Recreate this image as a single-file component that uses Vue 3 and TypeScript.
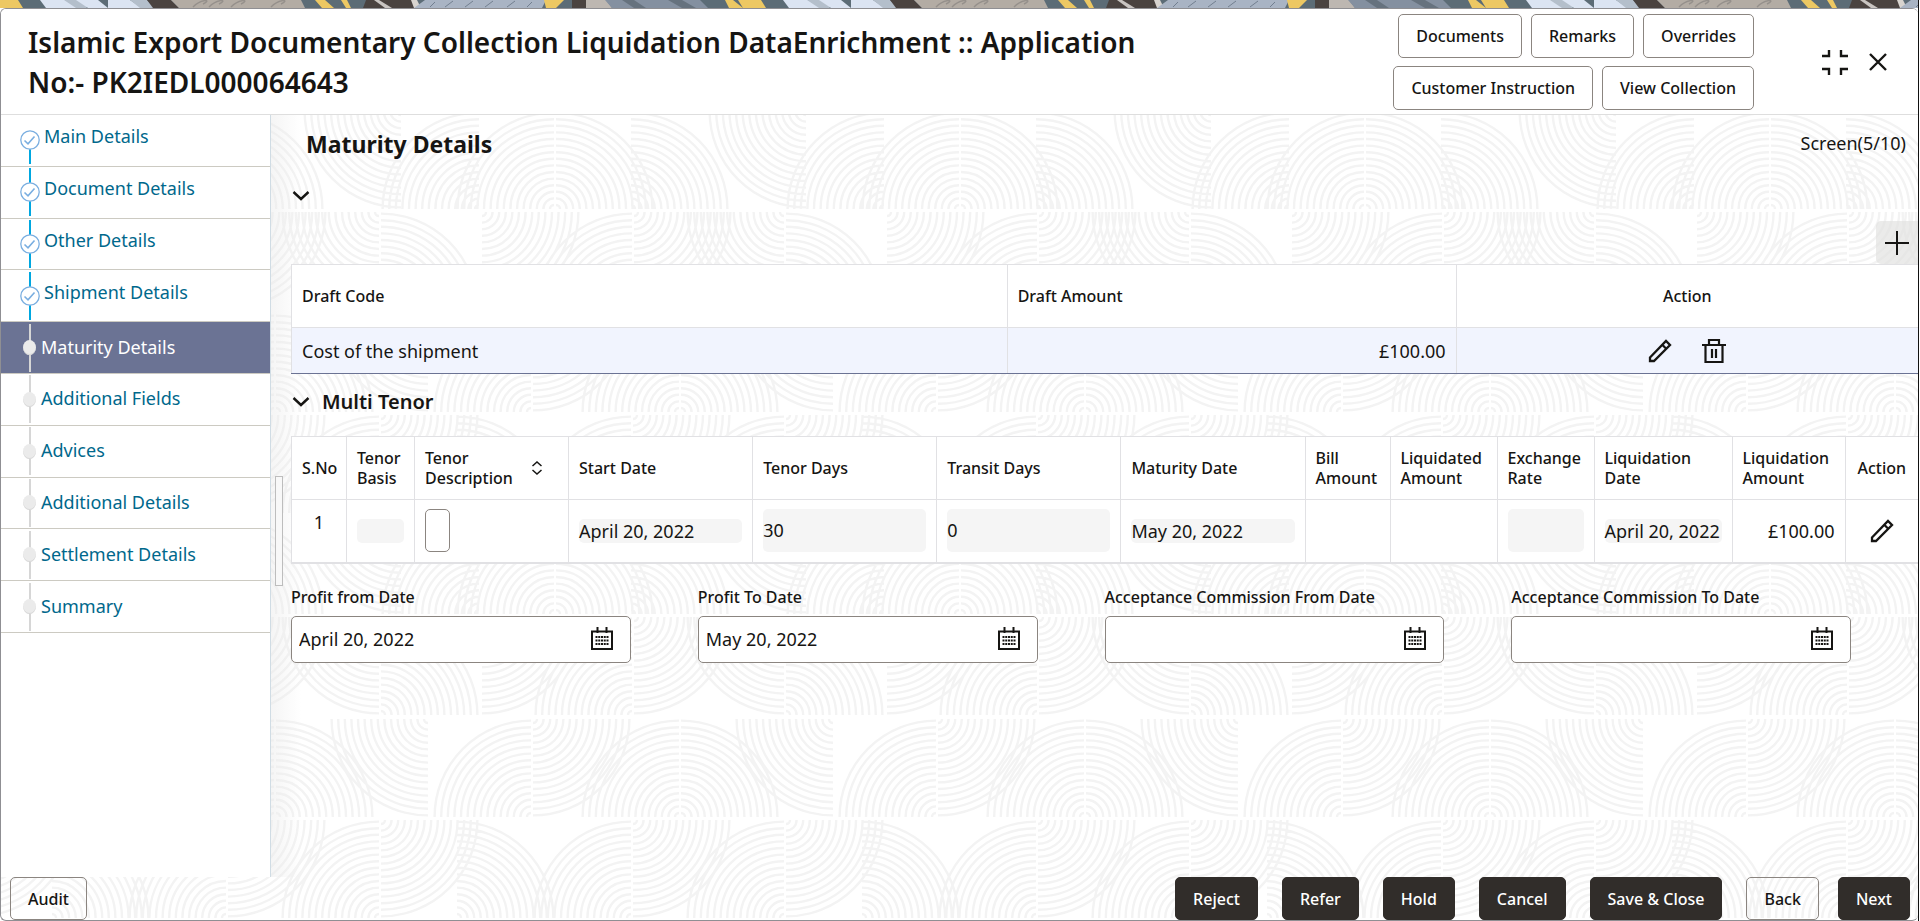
<script setup lang="ts">
import { ref } from 'vue'

interface Step {
  label: string
  state: 'done' | 'current' | 'todo'
}

interface DateField {
  id: string
  label: string
  value: string
}

interface Quarter {
  corner: 'TL' | 'TR' | 'BL' | 'BR'
  x: number
}

const steps: Step[] = [
  { label: 'Main Details', state: 'done' },
  { label: 'Document Details', state: 'done' },
  { label: 'Other Details', state: 'done' },
  { label: 'Shipment Details', state: 'done' },
  { label: 'Maturity Details', state: 'current' },
  { label: 'Additional Fields', state: 'todo' },
  { label: 'Advices', state: 'todo' },
  { label: 'Additional Details', state: 'todo' },
  { label: 'Settlement Details', state: 'todo' },
  { label: 'Summary', state: 'todo' }
]

const headerActions: string[][] = [
  ['Documents', 'Remarks', 'Overrides'],
  ['Customer Instruction', 'View Collection']
]

const dateFields = ref<DateField[]>([
  { id: 'profit-from', label: 'Profit from Date', value: 'April 20, 2022' },
  { id: 'profit-to', label: 'Profit To Date', value: 'May 20, 2022' },
  { id: 'acc-from', label: 'Acceptance Commission From Date', value: '' },
  { id: 'acc-to', label: 'Acceptance Commission To Date', value: '' }
])

const tenorDescription = ref('')

/* Backdrop: four rows of ribbed quarter circles, repeated every 405px. */
const tile = 405
const rowTops = [0, 101, 203, 304]
const rowHeight = 101
const rowQuarters: Quarter[][] = [
  [
    { corner: 'TL', x: 75 }, { corner: 'TL', x: 150 }, { corner: 'TR', x: 150 },
    { corner: 'TR', x: 225 }, { corner: 'BL', x: 402 }
  ],
  [
    { corner: 'BR', x: 76 }, { corner: 'TL', x: 228 }, { corner: 'BR', x: 228 },
    { corner: 'BL', x: 380 }, { corner: 'TR', x: 380 }
  ],
  [
    { corner: 'TL', x: 275 }, { corner: 'TR', x: 275 }, { corner: 'BL', x: 24 },
    { corner: 'TL', x: 127 }, { corner: 'BR', x: 127 }
  ],
  [
    { corner: 'TL', x: 380 }, { corner: 'BR', x: 380 }, { corner: 'TR', x: 51 },
    { corner: 'TL', x: 227 }, { corner: 'BR', x: 227 }
  ]
]

function arc(corner: Quarter['corner'], cx: number, cy: number, r: number): string {
  const h = corner[1] === 'L' ? -1 : 1
  const v = corner[0] === 'T' ? -1 : 1
  const sweep = h * v > 0 ? 1 : 0
  const x = cx + h
  return `M${x + h * r} ${cy}A${r} ${r} 0 0 ${sweep} ${x} ${cy + v * r}`
}

const ribs = rowQuarters
  .map((row, i) =>
    row
      .map((q) => {
        const cy = q.corner[0] === 'T' ? rowTops[i] + rowHeight - 1 : rowTops[i] + 2
        const parts: string[] = []
        for (const shift of [-tile, 0, tile]) {
          for (let r = 4; r <= 98; r += 6.6) parts.push(arc(q.corner, q.x + shift, cy, r))
        }
        return parts.join('')
      })
      .join('')
  )
  .join('')
</script>

<template>
  <div class="page">
    <svg class="strip" aria-hidden="true">
      <defs>
        <pattern id="strip-art" width="743" height="8" patternUnits="userSpaceOnUse">
          <rect width="743" height="8" fill="#5c6c76" />
          <path d="M0 0h18l5 8H0z" fill="#edc863" />
          <path d="M40 0h25l14 8H46z" fill="#dbe4f2" />
          <path d="M64 0h34l-12 8H76z" fill="#b4bfcb" />
          <path d="M76 0h22l10 8H88z" fill="#dbe4f2" />
          <path d="M108 0h22l12 8h-34z" fill="#dbe4f2" />
          <path d="M130 0h17l8 8h-15z" fill="#b4bfcb" />
          <path d="M147 0h24l8 8h-26z" fill="#4a4340" />
          <path d="M171 0h130l4 8H179z" fill="#b3aca4" />
          <path d="M193 7c8-8 20-8 10-3m6 3c8-8 20-8 10-3m12 3c8-8 20-8 10-3m30 3c8-8 20-8 10-3" fill="none" stroke="#95908b" stroke-width="1.5" />
          <path d="M315 0h10l9 8h-12zM341 0h6l4 8h-5z" fill="#edc863" />
          <path d="M366 0h47l6 8h-56z" fill="#4a4340" />
          <path d="M374 0h5l13 8h-7z" fill="#c9c5c2" />
          <path d="M411 0h6l4 8h-7z" fill="#d8d4cf" />
          <path d="M425 0h121l-4 8H414z" fill="#a9b4c4" />
          <path d="m430 7 5-5m10 5 8-6m12 6 8-6m12 6 8-6m14 6 8-6m12 6 5-5" stroke="#727f90" />
          <path d="M544 0h20l-8 8h-10z" fill="#edc863" />
          <path d="M572 0h14v8h-14z" fill="#4a4340" />
          <path d="M586 0h20l6 8h-26z" fill="#bdb7b1" />
          <path d="M605 0h95l8 8h-96z" fill="#8490a0" />
          <path d="m622 0 12 8h12l-12-8zm46 0 14 8h14l-14-8z" fill="#66727e" />
          <path d="M725 0h8l10 8h-14zM738 0h5v8z" fill="#edc863" />
        </pattern>
      </defs>
      <rect width="100%" height="8" fill="url(#strip-art)" />
    </svg>

    <div class="window">
      <svg class="backdrop" aria-hidden="true">
        <defs>
          <pattern id="ribs" x="-1" y="100" width="405" height="405" patternUnits="userSpaceOnUse">
            <path :d="ribs" fill="none" stroke="#f3f3f3" stroke-width="2.4" />
          </pattern>
        </defs>
        <rect width="100%" height="100%" fill="url(#ribs)" />
      </svg>

      <header class="header">
        <h1>Islamic Export Documentary Collection Liquidation DataEnrichment :: Application No:- PK2IEDL000064643</h1>
        <div class="header-actions">
          <div v-for="(row, i) in headerActions" :key="i" class="action-row">
            <button v-for="name in row" :key="name" type="button" class="btn">{{ name }}</button>
          </div>
        </div>
        <div class="window-controls">
          <button type="button" class="icon-btn" aria-label="Collapse">
            <svg width="28" height="28" viewBox="0 0 28 28" fill="none" stroke="#161513" stroke-width="2.4">
              <path d="M8 2v6H1M20 2v6h7M1 21h7v6M27 21h-7v6" />
            </svg>
          </button>
          <button type="button" class="icon-btn" aria-label="Close">
            <svg width="18" height="18" viewBox="0 0 18 18" fill="none" stroke="#161513" stroke-width="2.4">
              <path d="m1 1 16 16M17 1 1 17" />
            </svg>
          </button>
        </div>
      </header>

      <div class="body">
        <nav class="sidebar" aria-label="Steps">
          <ol>
            <li v-for="step in steps" :key="step.label" :class="['step', step.state]">
              <span class="track">
                <svg v-if="step.state === 'done'" class="tick" width="20" height="20" viewBox="0 0 20 20" fill="none" stroke="#7aaee0">
                  <circle cx="10" cy="10" r="9.2" fill="#fff" stroke-width="1.3" />
                  <path d="m4.500 10.500 3.500 3.300 6.500-7.300" stroke-width="1.6" />
                </svg>
                <span v-else class="dot"></span>
              </span>
              <a href="#" :aria-current="step.state === 'current' ? 'step' : undefined">{{ step.label }}</a>
            </li>
          </ol>
        </nav>

        <main class="content">
          <span class="splitter"></span>
          <div class="title-row">
            <h2>Maturity Details</h2>
            <span class="screen-count">Screen(5/10)</span>
          </div>

          <button type="button" class="chevron" aria-label="Toggle draft details">
            <svg width="18" height="12" viewBox="0 0 18 12" fill="none" stroke="#161513" stroke-width="2.4"><path d="m1.500 2 7.500 7 7.500-7" /></svg>
          </button>

          <div class="toolbar">
            <button type="button" class="add-btn" aria-label="Add draft">
              <svg width="24" height="24" viewBox="0 0 24 24" stroke="#161513" stroke-width="2"><path d="M12 0v24M0 12h24" /></svg>
            </button>
          </div>

          <table class="grid draft">
            <colgroup><col class="c-code" /><col class="c-amount" /><col /></colgroup>
            <thead>
              <tr><th>Draft Code</th><th>Draft Amount</th><th class="center">Action</th></tr>
            </thead>
            <tbody>
              <tr>
                <td>Cost of the shipment</td>
                <td class="right">£100.00</td>
                <td>
                  <div class="row-actions">
                    <button type="button" class="icon-btn" aria-label="Edit draft">
                      <svg width="24" height="24" viewBox="0 0 24 24" fill="none" stroke="#161513" stroke-width="2.3"><path d="M2 18.500 18 2l4 4L6 22H2zM14.500 6l3.700 3.700" /></svg>
                    </button>
                    <button type="button" class="icon-btn" aria-label="Delete draft">
                      <svg width="24" height="24" viewBox="0 0 24 24" fill="none" stroke="#161513" stroke-width="2.2"><path d="M0 6h24M7 6V1h10v5M3.500 6v17h17V6M10 10v9M14 10v9" /></svg>
                    </button>
                  </div>
                </td>
              </tr>
            </tbody>
          </table>

          <h3 class="section">
            <button type="button" class="chevron" aria-label="Toggle multi tenor">
              <svg width="18" height="12" viewBox="0 0 18 12" fill="none" stroke="#161513" stroke-width="2.4"><path d="m1.500 2 7.500 7 7.500-7" /></svg>
            </button>
            Multi Tenor
          </h3>

          <table class="grid tenor">
            <colgroup>
              <col class="w-no" /><col class="w-basis" /><col class="w-desc" /><col /><col /><col /><col />
              <col class="w-bill" /><col class="w-liq" /><col class="w-rate" /><col class="w-ldate" /><col class="w-lamt" /><col class="w-act" />
            </colgroup>
            <thead>
              <tr>
                <th>S.No</th>
                <th>Tenor<br />Basis</th>
                <th>
                  <div class="sortable">
                    <span>Tenor<br />Description</span>
                    <svg width="12" height="14" viewBox="0 0 12 14" fill="none" stroke="#161513" stroke-width="1.5"><path d="m1.500 5 4.500-4 4.500 4M1.500 9 6 13l4.500-4" /></svg>
                  </div>
                </th>
                <th>Start Date</th>
                <th>Tenor Days</th>
                <th>Transit Days</th>
                <th>Maturity Date</th>
                <th>Bill<br />Amount</th>
                <th>Liquidated<br />Amount</th>
                <th>Exchange<br />Rate</th>
                <th>Liquidation<br />Date</th>
                <th>Liquidation<br />Amount</th>
                <th class="center">Action</th>
              </tr>
            </thead>
            <tbody>
              <tr>
                <td class="serial">1</td>
                <td><span class="plain"></span></td>
                <td><input v-model="tenorDescription" class="desc" type="text" aria-label="Tenor Description" /></td>
                <td><span class="plain">April 20, 2022</span></td>
                <td><span class="plain tall">30</span></td>
                <td><span class="plain tall">0</span></td>
                <td><span class="plain">May 20, 2022</span></td>
                <td></td>
                <td></td>
                <td><span class="plain tall"></span></td>
                <td><span class="plain">April 20, 2022</span></td>
                <td class="right">£100.00</td>
                <td>
                  <div class="row-actions">
                    <button type="button" class="icon-btn" aria-label="Edit tenor">
                      <svg width="24" height="24" viewBox="0 0 24 24" fill="none" stroke="#161513" stroke-width="2.3"><path d="M2 18.500 18 2l4 4L6 22H2zM14.500 6l3.700 3.700" /></svg>
                    </button>
                  </div>
                </td>
              </tr>
            </tbody>
          </table>

          <div class="fields">
            <div v-for="field in dateFields" :key="field.id" class="field">
              <label :for="field.id">{{ field.label }}</label>
              <div class="date-box">
                <input :id="field.id" v-model="field.value" type="text" />
                <button type="button" class="icon-btn" :aria-label="'Pick ' + field.label">
                  <svg width="24" height="24" viewBox="0 0 24 24" fill="none" stroke="#161513">
                    <path d="M2 4.500h20V22H2zM7.500 0v6M16.500 0v6" stroke-width="2" />
                    <path d="M5.500 10h13M5.500 13.500h13M5.500 17h13" stroke-width="2.2" stroke-dasharray="2 .75" />
                  </svg>
                </button>
              </div>
            </div>
          </div>
        </main>
      </div>

      <footer class="footer">
        <button type="button" class="btn audit">Audit</button>
        <div class="footer-actions">
          <button type="button" class="btn dark">Reject</button>
          <button type="button" class="btn dark">Refer</button>
          <button type="button" class="btn dark">Hold</button>
          <button type="button" class="btn dark">Cancel</button>
          <button type="button" class="btn dark">Save &amp; Close</button>
          <button type="button" class="btn">Back</button>
          <button type="button" class="btn dark next">Next</button>
        </div>
      </footer>
    </div>
  </div>
</template>

<style>
body {
  background: #fff;
}
</style>

<style scoped>
* {
  box-sizing: border-box;
}

.page {
  display: flex;
  flex-direction: column;
  min-height: 100vh;
  margin-right: 1px;
  border-right: 1px solid #111;
  color: #161513;
  font-family: "Noto Sans", "Open Sans", sans-serif;
  font-size: 18px;
  line-height: 24px;
}

.strip {
  display: block;
  width: 100%;
  height: 8px;
  flex: none;
}

.window {
  position: relative;
  display: flex;
  flex-direction: column;
  flex: 1;
  border: 1px solid #8f8f93;
  border-right: 0;
  border-radius: 6px;
  overflow: hidden;
  background: #fff;
}

.backdrop {
  position: absolute;
  inset: 0;
  width: 100%;
  height: 100%;
}

.header {
  position: relative;
  display: flex;
  align-items: center;
  height: 106px;
  padding: 0 31px 0 27px;
  background: #fff;
  border-bottom: 1px solid #dedede;
}

h1 {
  flex: 1;
  max-width: 1150px;
  margin: 0;
  font-size: 28px;
  line-height: 40px;
  font-weight: 600;
}

.header-actions {
  display: flex;
  flex-direction: column;
  align-items: flex-end;
  gap: 8px;
  margin-left: auto;
}

.action-row {
  display: flex;
  gap: 9px;
}

.window-controls {
  display: flex;
  align-items: center;
  gap: 20px;
  margin-left: 67px;
}

button {
  font-family: inherit;
  color: inherit;
  cursor: pointer;
}

.btn {
  height: 44px;
  padding: 0 17px;
  border: 1px solid #8b8580;
  border-radius: 5px;
  background: transparent;
  font-size: 16px;
  font-weight: 550;
}

.icon-btn {
  display: inline-flex;
  padding: 0;
  border: 0;
  background: none;
}

.body {
  position: relative;
  display: flex;
  flex: 1;
}

.sidebar {
  width: 270px;
  flex: none;
  background: #fff;
  border-right: 1px solid #d0dce4;
}

.sidebar ol {
  display: grid;
  grid-auto-rows: 1fr;
  height: 518px;
  margin: 0;
  padding: 0;
  list-style: none;
}

.step {
  display: flex;
  align-items: center;
  border-bottom: 1px solid #cccac2;
}

.step a {
  padding-left: 4px;
  color: #00688c;
  text-decoration: none;
}

.step.done a {
  padding-bottom: 8px;
}

.step.current a,
.step.todo a {
  padding-left: 1px;
  padding-bottom: 2px;
}

.track {
  display: flex;
  align-items: center;
  justify-content: center;
  width: 20px;
  height: 48px;
  margin-left: 19px;
  background: linear-gradient(#d6d6d6, #d6d6d6) center / 2px 100% no-repeat;
}

.done .track {
  background-image: linear-gradient(#00a7e0, #00a7e0);
}

.step:first-child .track {
  background-size: 2px 50%;
  background-position: bottom;
}

.dot {
  width: 13px;
  height: 15px;
  margin-right: 1px;
  border-radius: 50%;
  background: #ebebeb;
  box-shadow: inset 0 -1px #d8d8d8;
}

.current {
  background: #6b7394;
}

.step.current a {
  color: #fff;
}

.content {
  position: relative;
  flex: 1;
  min-width: 0;
  padding: 0 0 0 20px;
  background: linear-gradient(90deg, rgba(235, 235, 235, .5), rgba(255, 255, 255, 0) 30px);
}

.splitter {
  position: absolute;
  left: 4px;
  top: 361px;
  width: 8px;
  height: 110px;
  border: 1px solid #bdbdbd;
  background: #f8f8f8;
}

.title-row {
  display: flex;
  justify-content: space-between;
  align-items: center;
  padding: 14px 12px 0 15px;
}

.screen-count {
  padding-bottom: 2px;
}

h2 {
  margin: 0;
  font-size: 23px;
  line-height: 30px;
  font-weight: 700;
}

.chevron {
  display: block;
  padding: 0;
  border: 0;
  background: none;
  height: 12px;
  line-height: 0;
}

.content > .chevron {
  margin: 31px 0 0 1px;
}

.toolbar {
  display: flex;
  justify-content: flex-end;
  margin-top: 19px;
}

.add-btn {
  display: flex;
  align-items: center;
  justify-content: center;
  width: 42px;
  height: 43px;
  padding: 0;
  border: 0;
  border-radius: 5px 0 0 5px;
  background: rgba(225, 225, 222, .65);
}

.grid {
  width: 100%;
  table-layout: fixed;
  border-collapse: collapse;
  background: #fff;
}

.grid th {
  height: 63px;
  padding: 0 10px;
  border: 1px solid #e1e1e4;
  font-size: 16px;
  line-height: 20px;
  font-weight: 550;
  text-align: left;
  white-space: nowrap;
}

.grid td {
  height: 46px;
  padding: 0 10px;
  border: 1px solid #e1e1e4;
  white-space: nowrap;
}

.grid th.center {
  text-align: center;
}

.grid th:last-child,
.grid td:last-child {
  border-right: 0;
}

.grid .right {
  text-align: right;
}

.draft td {
  background: #f1f4fe;
  border-bottom-color: #6b7394;
}

.c-code {
  width: 44%;
}

.c-amount {
  width: 27.6%;
}

.row-actions {
  display: flex;
  justify-content: center;
  gap: 30px;
}

.section {
  display: flex;
  align-items: center;
  gap: 12px;
  height: 56px;
  margin: 0;
  padding: 0 0 0 1px;
  font-size: 20px;
  line-height: 28px;
  font-weight: 600;
}

.section + .grid {
  margin-top: 6px;
}

.tenor td {
  height: 63px;
  border-bottom: 2px solid #e1e1e4;
}

.w-no { width: 55px; }
.w-basis { width: 68px; }
.w-desc { width: 154px; }
.w-bill { width: 85px; }
.w-liq { width: 107px; }
.w-rate { width: 97px; }
.w-ldate { width: 138px; }
.w-lamt { width: 113px; }
.w-act { width: 73px; }

.tenor .serial {
  padding: 0 10px 18px;
  text-align: center;
}

.sortable {
  display: flex;
  align-items: center;
  justify-content: space-between;
  padding-right: 15px;
}

.plain {
  display: block;
  height: 24px;
  border-radius: 5px;
  background: #f5f5f5;
}

.plain.tall {
  height: 43px;
  line-height: 43px;
}

.desc {
  display: block;
  width: 25px;
  height: 43px;
  padding: 0;
  border: 1px solid #8b8580;
  border-radius: 5px;
  background: #fff;
  font: inherit;
}

.fields {
  display: grid;
  grid-template-columns: repeat(4, 1fr);
  margin-top: 19px;
}

.field {
  padding-right: 67px;
}

.field label {
  display: block;
  padding: 2px 0 7px;
  font-size: 16px;
  line-height: 24px;
  font-weight: 550;
}

.date-box {
  display: flex;
  align-items: center;
  height: 47px;
  padding: 0 16px 0 0;
  border: 1px solid #8b8580;
  border-radius: 5px;
  background: #fff;
}

.date-box input {
  flex: 1;
  min-width: 0;
  height: 100%;
  padding: 0 7px;
  border: 0;
  background: none;
  color: inherit;
  font: inherit;
  outline: none;
}

.footer {
  position: relative;
  display: flex;
  justify-content: space-between;
  align-items: flex-start;
  height: 43px;
  padding: 0 8px 0 9px;
}

.footer-actions {
  display: flex;
  gap: 24px;
}

.footer .btn {
  height: 43px;
}

.btn.dark {
  border-color: #312d2a;
  background: #312d2a;
  color: #fff;
}

.btn.next {
  margin-left: -5px;
}
</style>
